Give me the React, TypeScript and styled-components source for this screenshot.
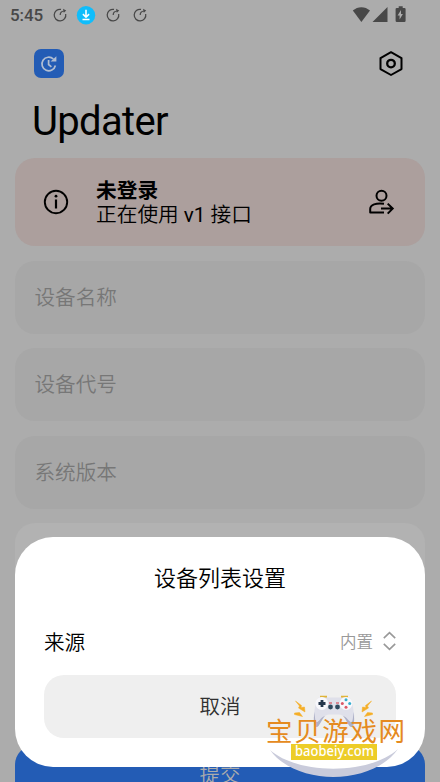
import React from 'react';
import styled, { createGlobalStyle } from 'styled-components';

const Global = createGlobalStyle`
  * { box-sizing: border-box; }
  body { margin: 0; background: #acacac; }
  svg { display: block; flex: none; overflow: visible; }
`;

const Screen = styled.div`
  position: relative;
  width: 440px;
  height: 782px;
  overflow: hidden;
  background: #acacac;
  color: #000;
  font-family: Roboto, 'Noto Sans CJK SC', sans-serif;
  font-weight: 350;
`;

const StatusBar = styled.div`
  height: 30px;
  padding: 0 33px 0 10px;
  display: flex;
  align-items: center;
  color: #484848;
`;

const Clock = styled.span`
  width: 42.5px;
  font-size: 17px;
  line-height: 20px;
  font-weight: 500;
  letter-spacing: -0.1px;
`;

const Notifications = styled.div`
  display: grid;
  grid-template-columns: 24px 29px 27px 15px;
  align-items: center;
`;

const SystemIcons = styled.div`
  margin-left: auto;
  display: flex;
  align-items: center;
`;

const Header = styled.header`
  height: 67px;
  padding: 0 36px 0 34px;
  display: flex;
  align-items: center;
  justify-content: space-between;
`;

const AppIcon = styled.div`
  width: 30px;
  height: 29px;
  border-radius: 7px;
  background: #235cb5;
  display: flex;
  align-items: center;
  justify-content: center;
`;

const Title = styled.h1`
  margin: 0;
  height: 61px;
  padding: 1px 0 0 32px;
  font-size: 40px;
  line-height: 48px;
  font-weight: 400;
  letter-spacing: -0.65px;
`;

const Content = styled.main`
  padding: 0 15px;
  display: flex;
  flex-direction: column;
  gap: 14.7px;
`;

const LoginCard = styled.section`
  height: 87.7px;
  margin-bottom: 0.4px;
  padding: 0 31px 0 28px;
  border-radius: 20px;
  background: #ac9f9d;
  display: flex;
  align-items: center;
`;

const LoginText = styled.div`
  flex: 1;
  padding: 2px 0 0 27px;
  font-size: 20.7px;
  line-height: 24px;
`;

const Strong = styled.div`
  font-weight: 700;
`;

const Version = styled.span`
  font-weight: 400;
`;

const Field = styled.div`
  height: 72.8px;
  padding: 1px 19.5px 0;
  border-radius: 20px;
  background: #a7a7a7;
  color: #777;
  display: flex;
  align-items: center;
  font-size: 20.6px;
  line-height: 30px;
`;

const OptionsCard = styled.div`
  height: 207px;
  border-radius: 20px;
  background: #b2b2b2;
`;

const Submit = styled.div`
  height: 60px;
  border-radius: 20px;
  background: #235cb5;
  color: #acacac;
  display: flex;
  align-items: center;
  justify-content: center;
  font-size: 20.5px;
  line-height: 24px;
`;

const Dialog = styled.section`
  position: absolute;
  left: 15px;
  right: 15px;
  bottom: 15px;
  height: 230px;
  padding: 26px 29px 29px;
  border-radius: 38px;
  background: #fff;
  display: flex;
  flex-direction: column;
`;

const DialogTitle = styled.h2`
  margin: 0;
  font-size: 22px;
  line-height: 32px;
  font-weight: inherit;
  text-align: center;
`;

const SourceRow = styled.div`
  height: 80px;
  padding-top: 11px;
  display: flex;
  align-items: center;
  font-size: 20.6px;
`;

const SourceValue = styled.span`
  margin-left: auto;
  margin-right: 10px;
  color: #999;
  font-size: 16.5px;
`;

const Cancel = styled.div`
  height: 63px;
  padding-bottom: 3px;
  border-radius: 20px;
  background: #efefef;
  color: #303030;
  display: flex;
  align-items: center;
  justify-content: center;
  font-size: 20.5px;
`;

const Watermark = styled.svg`
  position: absolute;
  left: 260px;
  top: 680px;
`;

const RotateIcon = () => (
  <svg width="15" height="15" viewBox="0 0 15 15" fill="none" stroke="currentColor" strokeWidth="1.25">
    <path d="M8 1.4A5.8 5.8 0 1 0 12.7 6" />
    <path d="M7.2 7.1C7.2 4.9 8.7 3.2 11.2 3" />
    <path d="M10 .8l3.2 1.7-2.4 2.3z" fill="currentColor" stroke="none" />
  </svg>
);

const DownloadIcon = () => (
  <svg width="19" height="19" viewBox="0 0 19 19">
    <circle cx="9" cy="9.3" r="9.2" fill="#10bdfb" />
    <path d="M9 3.8v7M5.9 8.1l3.1 3.1 3.1-3.1M5.5 13.5h7" fill="none" stroke="#fff" strokeWidth="1.6" />
  </svg>
);

const SignalIcons = () => (
  <svg width="55" height="18" viewBox="0 0 55 18" fill="currentColor">
    <path d="M.8 4.6C5.8.1 13 .1 18 4.6L9.400 16z" />
    <path d="M20.5 16H35.5V1z" />
    <path d="M46.7 .2h4v1.7h1.7q1.2 0 1.2 1.2v11.7q0 1.3-1.2 1.3h-7.5q-1.3 0-1.3-1.3V3.1q0-1.2 1.3-1.2h1.8z" />
    <path d="M49 4.1l-3.4 5.5h2v4l3.3-5.7h-1.9z" fill="#acacac" />
  </svg>
);

const UpdateIcon = () => (
  <svg width="18" height="18" viewBox="0 0 18 18" fill="none" stroke="#b1bed2" strokeWidth="1.7">
    <path d="M13.4 4A6.8 6.8 0 1 0 15.4 10.5" />
    <path d="M8.6 5v4.5l2.8 2.3" />
    <path d="M10.6 6.5h5.8V1.2z" fill="#b1bed2" stroke="none" />
  </svg>
);

const SettingsIcon = () => (
  <svg width="26" height="26" viewBox="0 0 26 26" fill="none" stroke="#000" strokeWidth="2" strokeLinejoin="round">
    <path d="M13 1.2l10.5 5.9v11L13 24 2.5 18.1v-11z" />
    <circle cx="13" cy="12.6" r="3.8" strokeWidth="2.3" />
  </svg>
);

const InfoIcon = () => (
  <svg width="26" height="26" viewBox="0 0 26 26" fill="none" stroke="#000" strokeWidth="1.9">
    <circle cx="13" cy="13" r="11.2" />
    <path d="M13 10.5v9" strokeWidth="2.2" />
    <circle cx="13" cy="7.2" r="1.4" fill="#000" stroke="none" />
  </svg>
);

const AccountIcon = () => (
  <svg width="26" height="26" viewBox="0 0 26 26" fill="none" stroke="#000" strokeWidth="2">
    <circle cx="13.5" cy="6.7" r="5" />
    <path d="M16 14.8C8 14 2.2 15.5 2.2 20v3.6H16" strokeLinejoin="round" />
    <path d="M13 19.6h11.5M19.7 14.6l5 5-5 5" />
  </svg>
);

const UpDownIcon = () => (
  <svg width="13" height="20" viewBox="0 0 13 20" fill="none" stroke="#999" strokeWidth="1.6">
    <path d="M.8 7.2L6.5 1.7l5.7 5.5M.8 12.8l5.7 5.5 5.7-5.5" />
  </svg>
);

const SiteMark = () => (
  <Watermark width="160" height="102" viewBox="0 0 160 102">
    <path d="M10 70C38 101 109 101 138 70V80H10z" fill="#fff" />
    <path d="M10 70C36 106 112 106 138 69C110 95 38 95 10 70z" fill="#c9cbdb" />
    <path d="M59 17.5q4-2 9 0h12q5-2 9 0c3 2 4 9 5 16 .6 6 .5 12-2 13.5-3 1-5-7-9-11q-1.5-1.5-4-1.5H69q-2.500 0-4 1.500c-4 4-6 12-9 11-2.500-1.500-2.600-7.500-2-13.500 1-7 2-14 5-16z" fill="#dfe0ea" />
    <path d="M93.5 32c1 7 1 13-1.5 15-3 1-5-7-9-11 4 1 7 7 8.5 6s1.5-5 2-10zM54.5 32c-1 7-1 13 1.5 15 3 1 5-7 9-11-4 1-7 7-8.5 6s-1.5-5-2-10z" fill="#aeb1c7" />
    <path d="M60 16.7h7M81 16.7h7" stroke="#e0b437" strokeWidth="1.8" />
    <circle cx="61.8" cy="23.5" r="6.4" fill="#f8f8fc" />
    <circle cx="86" cy="23.5" r="6.4" fill="#f8f8fc" />
    <path d="M62 20v7M58.5 23.5h7" stroke="#25374c" strokeWidth="2.8" />
    <g fill="#db5968"><circle cx="82.3" cy="23.5" r="1.5" /><circle cx="86" cy="27.2" r="1.5" /></g>
    <g fill="#35afd0"><circle cx="86" cy="19.8" r="1.5" /><circle cx="89.7" cy="23.5" r="1.5" /></g>
    <circle cx="70.5" cy="27" r="2.4" fill="#30495e" />
    <circle cx="77.5" cy="27" r="2.4" fill="#30495e" />
    <path d="M69 23h3M76 23h3" stroke="#d96b78" strokeWidth="1.5" />
    <path d="M35.5 21l6 4.5-.5 2 3.5-.5.5 5-6.5-4 1-2zM34.5 33l5-.5 3 4-8-2zM111.5 21l-6 4.5.5 2-3.5-.5-.5 5 6.5-4-1-2zM112.5 33l-5-.5-3 4 8-2z" fill="#f5ae27" stroke="#f5ae27" strokeWidth=".5" />
    <text x="6" y="61" fontFamily="'Noto Sans CJK SC', sans-serif" fontSize="26.5" fontWeight="400" fill="#e58a20" textLength="139" lengthAdjust="spacing">宝贝游戏网</text>
    <rect x="31" y="64" width="86" height="16" fill="#edcd28" />
    <text x="35" y="76" fontFamily="'Noto Sans', sans-serif" fontSize="13.5" fontWeight="500" fill="#fff" textLength="79" lengthAdjust="spacingAndGlyphs">baobeiy.com</text>
  </Watermark>
);

export default function App() {
  return (
    <Screen>
      <Global />
      <StatusBar>
        <Clock>5:45</Clock>
        <Notifications>
          <RotateIcon />
          <DownloadIcon />
          <RotateIcon />
          <RotateIcon />
        </Notifications>
        <SystemIcons><SignalIcons /></SystemIcons>
      </StatusBar>
      <Header>
        <AppIcon><UpdateIcon /></AppIcon>
        <SettingsIcon />
      </Header>
      <Title>Updater</Title>
      <Content>
        <LoginCard>
          <InfoIcon />
          <LoginText>
            <Strong>未登录</Strong>
            <div>正在使用 <Version>v1</Version> 接口</div>
          </LoginText>
          <AccountIcon />
        </LoginCard>
        <Field>设备名称</Field>
        <Field>设备代号</Field>
        <Field>系统版本</Field>
        <OptionsCard />
        <Submit>提交</Submit>
      </Content>
      <Dialog>
        <DialogTitle>设备列表设置</DialogTitle>
        <SourceRow>
          来源
          <SourceValue>内置</SourceValue>
          <UpDownIcon />
        </SourceRow>
        <Cancel>取消</Cancel>
      </Dialog>
      <SiteMark />
    </Screen>
  );
}
